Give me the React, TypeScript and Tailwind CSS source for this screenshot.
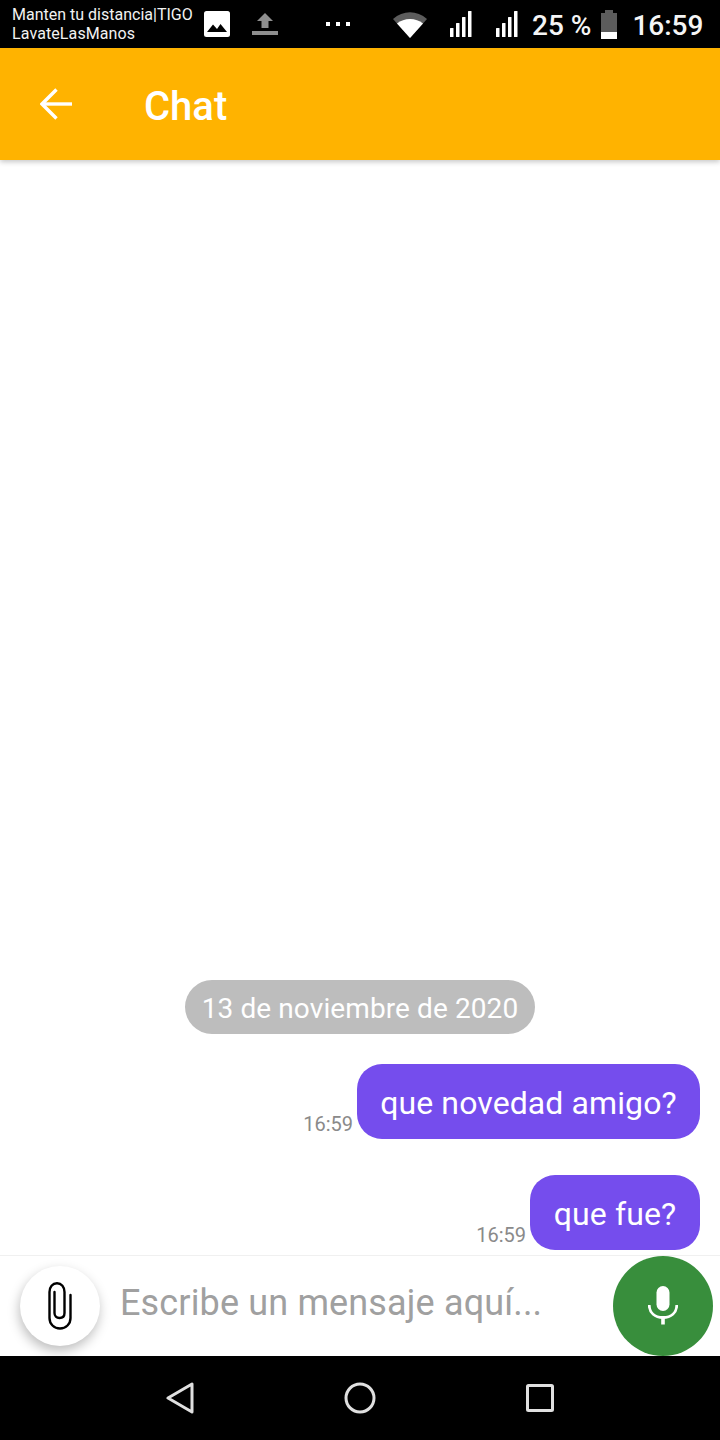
import React from "react";

function Bars() {
  return (
    <svg width="24" height="28" viewBox="0 0 24 28" fill="#fff">
      <rect x="1" y="18" width="3.5" height="9" rx="0.5" />
      <rect x="7" y="13" width="3.5" height="14" rx="0.5" />
      <rect x="13" y="7" width="3.5" height="20" rx="0.5" />
      <rect x="19" y="1" width="3.5" height="26" rx="0.5" />
    </svg>
  );
}

function StatusBar() {
  return (
    <div className="h-12 shrink-0 bg-black flex items-center text-white relative font-['Roboto',sans-serif]">
      <div className="pl-3 w-[204px] shrink-0 text-[16px] leading-[19px] whitespace-nowrap text-[#f2f2f2]">
        <div>Manten tu distancia|TIGO</div>
        <div className="tracking-[0.1px]">LavateLasManos</div>
      </div>
      <svg width="26" height="26" viewBox="0 0 26 26" className="shrink-0">
        <rect width="26" height="26" rx="2.5" fill="#fff" />
        <path d="M3 21 L9 13.5 L13 18 L16.5 13 L23 21 Z" fill="#000" />
      </svg>
      <svg width="26" height="22" viewBox="0 0 26 22" className="shrink-0 ml-[22px]">
        <path d="M13 0 L21 8 H16.5 V15 H9.5 V8 H5 Z" fill="#8e8e8e" />
        <rect y="18" width="26" height="4" fill="#8e8e8e" />
      </svg>
      <div className="flex gap-[6px] ml-[48px] shrink-0">
        <div className="w-1 h-1 bg-white" />
        <div className="w-1 h-1 bg-white" />
        <div className="w-1 h-1 bg-white" />
      </div>
      <svg width="34" height="26" viewBox="0 0 34 26" className="shrink-0 ml-[43px] mt-[1px]">
        <path d="M17 26 L0 7 C10 -2 24 -2 34 7 Z" fill="#5c5c5c" />
        <path d="M17 26 L4 11.5 C11 5.5 23 5.5 30 11.5 Z" fill="#fff" />
      </svg>
      <div className="ml-[22px] shrink-0"><Bars /></div>
      <div className="ml-[22px] shrink-0"><Bars /></div>
      <span className="ml-[13px] mt-1 text-[28px] leading-none font-medium whitespace-nowrap text-[#f5f5f5]">25 %</span>
      <div className="ml-[10px] shrink-0 w-4 h-[29px] flex flex-col items-center">
        <div className="w-2 h-[3px] bg-[#5c5c5c]" />
        <div className="w-4 flex-1 bg-[#5c5c5c]" />
        <div className="w-4 h-[7px] bg-white" />
      </div>
      <span className="ml-[15px] mt-1 text-[28px] leading-none font-medium whitespace-nowrap text-[#f5f5f5]">16:59</span>
    </div>
  );
}

function Header() {
  return (
    <div className="h-28 shrink-0 bg-[#ffb300] flex items-center shadow-[0_2px_5px_rgba(0,0,0,0.22)] relative z-10 font-['Roboto',sans-serif]">
      <svg width="32" height="32" viewBox="0 0 32 32" fill="none" stroke="#fff" strokeWidth="3.4" className="ml-10 shrink-0 -mt-[1px]">
        <path d="M32 16 H2" />
        <path d="M16.5 1.5 L2 16 L16.5 30.5" />
      </svg>
      <span className="ml-[72px] mt-[6px] text-[40px] leading-none font-medium text-white">Chat</span>
    </div>
  );
}

function Bubble({ text, width }: { text: string; width: string }) {
  return (
    <div className="flex justify-end items-end pr-5">
      <span className="text-[20px] leading-none text-[#8a8a8a] mr-1 mb-[5px]">16:59</span>
      <div className={`${width} h-[75px] bg-[#754ded] rounded-[25px] text-white text-[32px] leading-none flex items-center justify-center tracking-[0.1px] pt-[2px]`}>
        {text}
      </div>
    </div>
  );
}

function Composer() {
  return (
    <div className="h-[101px] shrink-0 bg-white border-t border-[#f0f0f0] flex items-center font-['Roboto',sans-serif]">
      <div className="ml-5 w-20 h-20 shrink-0 rounded-full bg-white shadow-[-1px_5px_12px_rgba(0,0,0,0.26)] flex items-center justify-center">
        <svg width="24" height="48" viewBox="0 0 24 48" fill="none" stroke="#000" strokeWidth="2.4">
          <path d="M22.5 13 V36 C22.5 42 18 46.5 12 46.5 C6 46.5 1.5 42 1.5 36 V10 C1.5 5 4.5 1.2 9 1.2 C13.5 1.2 16.5 5 16.5 10 V31 C16.5 34 14.5 36 11.5 36 C8.5 36 6.5 34 6.5 31 V10" strokeLinecap="round" />
        </svg>
      </div>
      <div className="ml-5 -mt-[6px] flex-1 text-[36px] leading-none text-[#a0a0a0] whitespace-nowrap tracking-[0.15px]">Escribe un mensaje aquí...</div>
      <div className="mr-[7px] w-[100px] h-[100px] shrink-0 rounded-full bg-[#388e3c] flex items-center justify-center">
        <svg width="30" height="40" viewBox="0 0 30 40" fill="#fff">
          <rect x="8.5" y="0" width="13" height="25" rx="6.5" />
          <path d="M1.2 19 C1.5 27 7 31.5 15 31.5 C23 31.5 28.5 27 28.8 19" fill="none" stroke="#fff" strokeWidth="2.8" />
          <rect x="13.2" y="31" width="3.6" height="7.5" />
        </svg>
      </div>
    </div>
  );
}

function NavBar() {
  return (
    <div className="h-[84px] shrink-0 bg-black">
      <div className="h-full flex items-center justify-center gap-[126px]">
        <svg width="54" height="32" viewBox="0 0 54 32" fill="none" stroke="#e0e0e0" strokeWidth="3" strokeLinejoin="round" className="mr-[11px]">
          <path d="M39 2 V30 L15 16 Z" />
        </svg>
        <svg width="32" height="32" viewBox="0 0 32 32" fill="none" stroke="#e0e0e0" strokeWidth="3">
          <circle cx="16" cy="16" r="14" />
        </svg>
        <svg width="54" height="28" viewBox="0 0 54 28" fill="none" stroke="#e0e0e0" strokeWidth="3" strokeLinejoin="round" className="ml-[11px]">
          <rect x="14.5" y="1.5" width="25" height="25" rx="1" />
        </svg>
      </div>
    </div>
  );
}

export default function App() {
  return (
    <div className="w-[720px] h-[1440px] flex flex-col bg-white overflow-hidden font-['Roboto',sans-serif]">
      <StatusBar />
      <Header />
      <div className="flex-1 flex flex-col justify-end pb-[5px]">
        <div className="self-center w-[350px] h-[54px] rounded-[27px] bg-[#bdbdbd] text-white text-[28px] leading-none flex items-center justify-center tracking-[0.1px] pt-1 mb-[30px]">
          13 de noviembre de 2020
        </div>
        <div className="mb-9">
          <Bubble text="que novedad amigo?" width="w-[343px]" />
        </div>
        <Bubble text="que fue?" width="w-[170px]" />
      </div>
      <Composer />
      <NavBar />
    </div>
  );
}
